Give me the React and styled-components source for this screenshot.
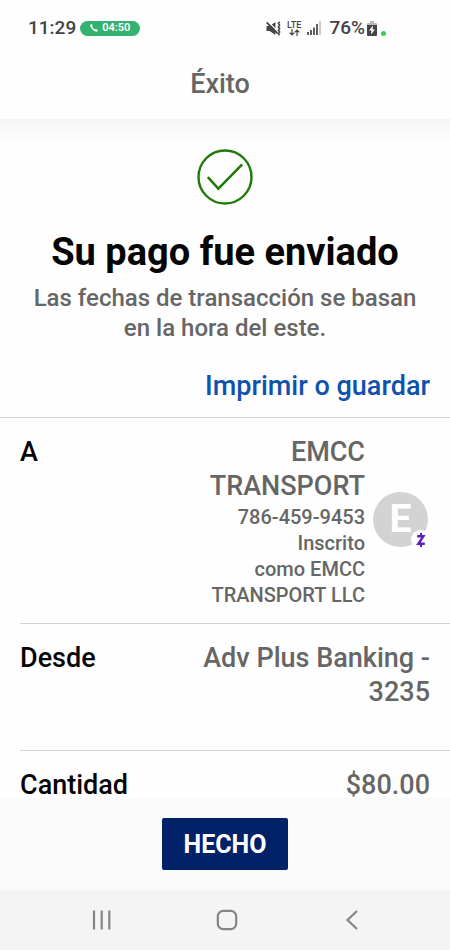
import React from "react";
import styled, { createGlobalStyle } from "styled-components";

const App = () => {
  return (
    <>
      <GlobalStyles />
      <Screen>
        <StatusBar />
        <Header>
          <HeaderTitle>Éxito</HeaderTitle>
        </Header>
        <Main>
          <Hero>
            <CheckIcon />
            <Title>Su pago fue enviado</Title>
            <Subtitle>
              Las fechas de transacción se basan en la hora del este.
            </Subtitle>
          </Hero>
          <LinkRow>
            <PrintLink href="#imprimir">Imprimir o guardar</PrintLink>
          </LinkRow>
          <Details>
            <Row>
              <Label>A</Label>
              <Recipient>
                <RecipientText>
                  <Value>EMCC TRANSPORT</Value>
                  <Small>
                    786-459-9453
                    <br />
                    Inscrito
                    <br />
                    como EMCC
                    <br />
                    TRANSPORT LLC
                  </Small>
                </RecipientText>
                <Avatar>
                  E
                  <Badge>
                    <ZelleIcon />
                  </Badge>
                </Avatar>
              </Recipient>
            </Row>
            <Row $tall>
              <Label>Desde</Label>
              <Data>
                <Value>Adv Plus Banking - 3235</Value>
              </Data>
            </Row>
            <Row>
              <Label>Cantidad</Label>
              <Data>
                <Value>$80.00</Value>
              </Data>
            </Row>
          </Details>
        </Main>
        <Footer>
          <DoneBtn type="button">HECHO</DoneBtn>
        </Footer>
        <NavBar />
      </Screen>
    </>
  );
};

const StatusBar = () => {
  return (
    <Status>
      <StatusGroup>
        <Clock>11:29</Clock>
        <CallPill>
          <svg width="8" height="8" viewBox="0 0 8 8" aria-hidden="true">
            <path
              d="M1.2 0.8C1 3.8 4 6.9 7.1 6.8"
              fill="none"
              stroke="#fff"
              strokeWidth="1.3"
            />
            <path
              d="M1.4 1.2v1.4M5.3 6.2l1.5 0.3"
              stroke="#fff"
              strokeWidth="2"
              strokeLinecap="round"
            />
          </svg>
          04:50
        </CallPill>
      </StatusGroup>
      <StatusGroup>
        <MuteIcon />
        <Network>
          LTE
          <svg width="11" height="7" viewBox="0 0 11 7" aria-hidden="true">
            <path
              d="M3 0v6M0.7 3.7L3 6l2.3-2.3M8 7V1M5.7 3.3L8 1l2.3 2.3"
              fill="none"
              stroke="#444"
              strokeWidth="1.2"
            />
          </svg>
        </Network>
        <SignalIcon />
        <Battery>
          76%
          <BatteryIcon />
        </Battery>
        <PrivacyDot />
      </StatusGroup>
    </Status>
  );
};

const MuteIcon = () => (
  <svg width="15" height="15" viewBox="0 0 15 15" aria-hidden="true">
    <path d="M0.5 5h3.2L9.4 1v13L3.7 10H0.5z" fill="#444" />
    <path d="M2 0.8l8.4 8" stroke="#fff" strokeWidth="1.2" />
    <path d="M0.6 1.4L11.6 12.4" stroke="#444" strokeWidth="1.8" />
    <path
      d="M13.6 0.8l-1.2 1.7 1.2 1.7-1.2 1.7 1.2 1.7-1.2 1.7 1.2 1.7-1.2 1.7 1 1.5"
      fill="none"
      stroke="#444"
      strokeWidth="1.6"
    />
  </svg>
);

const SignalIcon = () => (
  <svg width="14" height="14" viewBox="0 0 14 14" aria-hidden="true">
    <path
      d="M1 14v-3M4 14V9M7 14V6.5M10 14V3"
      stroke="#444"
      strokeWidth="1.7"
    />
    <path d="M13 14V0" stroke="#b9b9b9" strokeWidth="1.5" />
  </svg>
);

const BatteryIcon = () => (
  <svg width="10" height="15" viewBox="0 0 10 15" aria-hidden="true">
    <path d="M3 0h4v2h2q1 0 1 1v2H0V3q0-1 1-1h2z" fill="#b9b9b9" />
    <path d="M0 4h10v10q0 1-1 1H1q-1 0-1-1z" fill="#444" />
    <path d="M6 4.5L2 9.5h2.4L4 13.5l4-5H5.6z" fill="#fff" />
  </svg>
);

const CheckIcon = () => (
  <svg width="56" height="56" viewBox="0 0 56 56" aria-hidden="true">
    <circle cx="28" cy="28" r="26.5" fill="none" stroke="#1f7a0a" strokeWidth="2.4" />
    <path
      d="M10.8 28.2L21.4 39.6L45.2 15.4"
      fill="none"
      stroke="#1f7a0a"
      strokeWidth="2.5"
    />
  </svg>
);

const ZelleIcon = () => (
  <svg width="10" height="16" viewBox="0 0 10 16" aria-hidden="true">
    <path
      d="M1.2 4.2h6.2L2.4 11.8h6.4"
      fill="none"
      stroke="#5a1fc0"
      strokeWidth="2.4"
    />
    <path d="M5 1v3M5 12v3" stroke="#5a1fc0" strokeWidth="2" />
  </svg>
);

const NavBar = () => (
  <Nav>
    <NavBtn type="button" aria-label="Recientes">
      <svg width="20" height="20" viewBox="0 0 20 20">
        <path d="M2 0.5v19M9.7 0.5v19M17.3 0.5v19" />
      </svg>
    </NavBtn>
    <NavBtn type="button" aria-label="Inicio">
      <svg width="22" height="22" viewBox="0 0 22 22">
        <rect x="1.8" y="1.8" width="18.4" height="18.4" rx="5.5" />
      </svg>
    </NavBtn>
    <NavBtn type="button" aria-label="Atrás">
      <svg width="20" height="20" viewBox="0 0 20 20">
        <path d="M15 1L5.5 10L15 19" />
      </svg>
    </NavBtn>
  </Nav>
);

const GlobalStyles = createGlobalStyle`
  * {
    box-sizing: border-box;
  }

  body {
    margin: 0;
    background: #fefefe;
    color: #666;
    font-family: Roboto, "Liberation Sans", sans-serif;
    font-weight: 500;
  }
`;

const Screen = styled.div`
  display: flex;
  flex-direction: column;
  height: 100vh;
`;

const Status = styled.div`
  display: flex;
  justify-content: space-between;
  align-items: center;
  height: 56px;
  padding: 0 64px 0 28px;
  color: #444;
`;

const StatusGroup = styled.div`
  display: flex;
  align-items: center;
  gap: 4px;
  line-height: 16px;
`;

const Clock = styled.span`
  font-size: 19px;
`;

const CallPill = styled.span`
  display: flex;
  align-items: center;
  gap: 4px;
  height: 15px;
  padding: 0 10px;
  border-radius: 8px;
  background: #35b26f;
  color: #fff;
  font-size: 11px;
  font-weight: 600;
`;

const Network = styled.span`
  display: flex;
  flex-direction: column;
  align-items: center;
  margin: 0 2px;
  font-size: 9px;
  line-height: 8px;
`;

const Battery = styled.span`
  display: flex;
  align-items: center;
  gap: 2px;
  margin-left: 4px;
  font-size: 19px;
`;

const PrivacyDot = styled.span`
  align-self: flex-end;
  width: 5px;
  height: 5px;
  border-radius: 50%;
  background: #3ad04a;
`;

const Header = styled.header`
  padding: 12px 30px 19px 20px;
  text-align: center;
`;

const HeaderTitle = styled.h1`
  margin: 0;
  font-size: 27px;
  line-height: 32px;
  font-weight: 500;
`;

const Main = styled.main`
  flex: 1;
  min-height: 0;
  overflow-y: auto;
  scrollbar-width: none;
  background: linear-gradient(#f5f5f5, #fafafa 12px, #fefefe 26px);
`;

const Hero = styled.section`
  display: flex;
  flex-direction: column;
  align-items: center;
  padding: 30px 24px 0;
  text-align: center;
`;

const Title = styled.h2`
  margin: 24px 0 8px;
  color: #050505;
  font-size: 38px;
  line-height: 46px;
  font-weight: 700;
`;

const Subtitle = styled.p`
  margin: 0;
  font-size: 24px;
  line-height: 30px;
`;

const LinkRow = styled.div`
  display: flex;
  justify-content: flex-end;
  padding: 26px 20px 14px;
`;

const PrintLink = styled.a`
  color: #0f52ae;
  font-size: 27px;
  line-height: 34px;
  text-decoration: none;
`;

const Details = styled.dl`
  margin: 0;
  border-top: 1px solid #d2d2d2;
`;

const Row = styled.div`
  display: flex;
  justify-content: space-between;
  margin-left: 20px;
  padding: ${({ $tall }) => ($tall ? "17px 20px 41px 0" : "17px 20px 15px 0")};

  & + & {
    border-top: 1px solid #d2d2d2;
  }
`;

const Label = styled.dt`
  color: #050505;
  font-size: 27px;
  line-height: 34px;
`;

const Data = styled.dd`
  width: 60%;
  margin: 0;
  text-align: right;
`;

const Recipient = styled(Data)`
  display: flex;
  justify-content: flex-end;
  align-items: center;
  gap: 8px;
`;

const RecipientText = styled.div`
  width: 160px;
`;

const Value = styled.div`
  font-size: 27px;
  line-height: 34px;
`;

const Small = styled.div`
  margin-top: 1px;
  font-size: 20px;
  line-height: 26px;
`;

const Avatar = styled.div`
  position: relative;
  flex: none;
  width: 55px;
  height: 55px;
  margin: 0 2px 4px 0;
  border-radius: 50%;
  background: #d3d3d3;
  color: #fff;
  font-size: 39px;
  line-height: 55px;
  font-weight: 700;
  text-align: center;
`;

const Badge = styled.span`
  position: absolute;
  right: -2px;
  bottom: -2px;
  display: flex;
  align-items: center;
  justify-content: center;
  width: 19px;
  height: 19px;
  border-radius: 50%;
  background: #fefefe;
`;

const Footer = styled.footer`
  display: flex;
  justify-content: center;
  padding: 20px;
  background: #fafafa;
`;

const DoneBtn = styled.button`
  min-width: 126px;
  height: 52px;
  padding: 0 20px;
  border: none;
  border-radius: 2px;
  background: #012169;
  color: #fff;
  font-family: inherit;
  font-size: 25px;
  font-weight: 700;
  cursor: pointer;
`;

const Nav = styled.nav`
  display: flex;
  justify-content: space-around;
  align-items: center;
  height: 60px;
  padding: 0 36px 0 40px;
  background: #f4f4f4;
`;

const NavBtn = styled.button`
  display: flex;
  padding: 8px;
  border: none;
  background: none;

  svg {
    fill: none;
    stroke: #858585;
    stroke-width: 2.2;
  }
`;

export default App;
